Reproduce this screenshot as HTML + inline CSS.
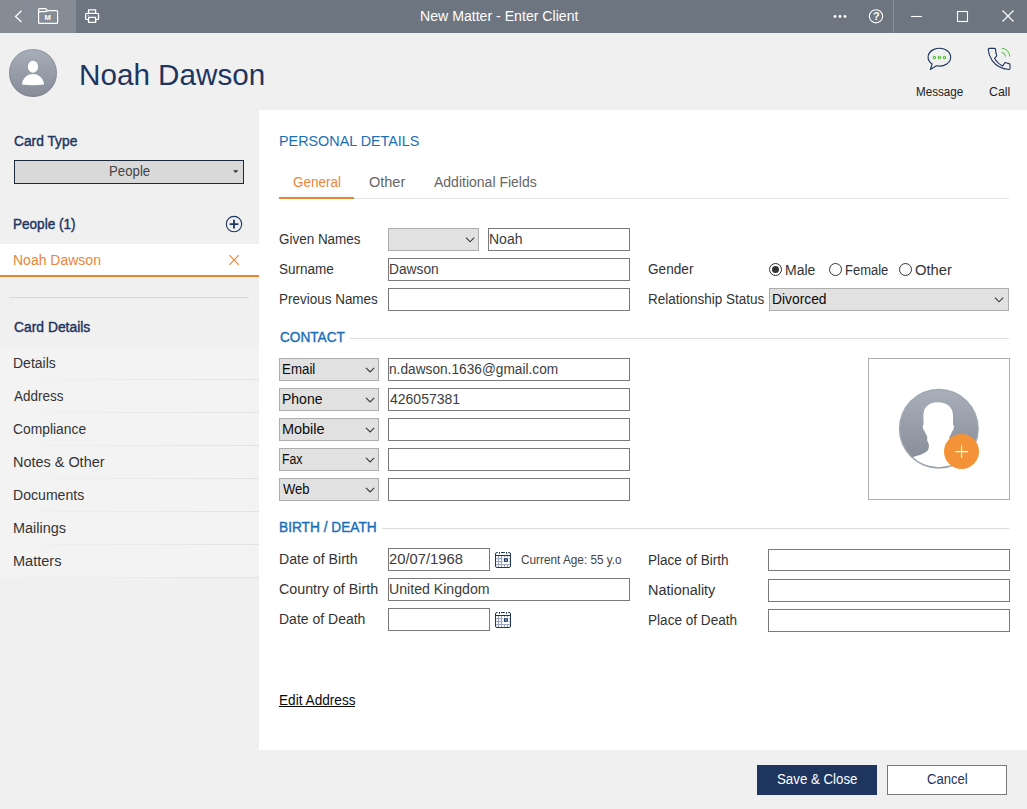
<!DOCTYPE html>
<html lang="en">
<head>
<meta charset="utf-8">
<title>New Matter - Enter Client</title>
<style>
html,body{margin:0;padding:0;}
body{width:1027px;height:809px;position:relative;overflow:hidden;background:#f0f0f0;font-family:"Liberation Sans",sans-serif;font-size:13.5px;color:#1e1e1e;}
.abs{position:absolute;}
.t{position:absolute;white-space:nowrap;line-height:1;transform-origin:0 0;}
svg{position:absolute;overflow:visible;}
#titlebar{left:0;top:0;width:1027px;height:33px;background:#6d7580;}
#tb-left{left:0;top:0;width:76px;height:33px;background:#858c96;}
#panel{left:259px;top:110px;width:768px;height:640px;background:#fff;}
.inp{position:absolute;box-sizing:border-box;border:1px solid #7a7a7a;background:#fff;height:23px;}
.sel{position:absolute;box-sizing:border-box;border:1px solid #adadad;background:#e1e1e1;height:23px;}
.hr{position:absolute;height:1px;background:#dcdcdc;}
.nav{position:absolute;left:0;width:259px;height:33px;background:#f3f3f3;}
.nav::after{content:"";position:absolute;left:0;right:0;bottom:0;height:1px;background:linear-gradient(90deg,#f2f2f2 0%,#ececec 40%,#e2e2e2 100%);}
.radio{position:absolute;box-sizing:border-box;width:13px;height:13px;border-radius:50%;border:1px solid #333;background:#fff;}
.radio.on::after{content:"";position:absolute;left:2px;top:2px;width:7px;height:7px;border-radius:50%;background:#333;}
</style>
</head>
<body>
<!-- TITLE BAR -->
<div id="titlebar" class="abs"></div>
<div id="tb-left" class="abs"></div>
<svg id="tbicons" style="left:0;top:0;" width="1027" height="33" viewBox="0 0 1027 33" fill="none" stroke="#fff" stroke-width="1.2">
  <!-- back -->
  <polyline points="21.5,10.8 15.5,16.4 21.5,22" stroke-width="1.3"/>
  <!-- folder -->
  <path d="M38.6 22.4 V9.6 a1 1 0 0 1 1 -1 H45.6 l2 2 H56.6 a1 1 0 0 1 1 1 V22.4 a1 1 0 0 1 -1 1 H39.6 a1 1 0 0 1 -1 -1 Z M38.6 11.6 H45.6 l2 -1" stroke-width="1.2"/>
  <!-- printer -->
  <path d="M88.6 13.4 V9.9 H95.6 V13.4 M88.6 19.6 H87 a1.4 1.4 0 0 1 -1.4 -1.4 V14.8 a1.4 1.4 0 0 1 1.4 -1.4 H97.2 a1.4 1.4 0 0 1 1.4 1.4 V18.2 a1.4 1.4 0 0 1 -1.4 1.4 H95.6 M88.6 17.3 H95.6 V22.4 H88.6 Z" stroke-width="1.3"/>
  <circle cx="88.2" cy="15.5" r="0.6" fill="#fff" stroke="none"/>
  <!-- dots -->
  <g fill="#fff" stroke="none"><circle cx="835" cy="16.5" r="1.4"/><circle cx="840" cy="16.5" r="1.4"/><circle cx="845" cy="16.5" r="1.4"/></g>
  <!-- help -->
  <circle cx="876" cy="16.3" r="6.6" stroke-width="1.1"/>
  <!-- sep -->
  <line x1="893.5" y1="0" x2="893.5" y2="33" stroke="#8a919a" stroke-width="1"/>
  <!-- min / max / close -->
  <line x1="911" y1="16.5" x2="922" y2="16.5" stroke-width="1.1"/>
  <rect x="957.5" y="11.5" width="10" height="10" stroke-width="1.1"/>
  <path d="M1002.5 10.5 L1013.5 21.5 M1013.5 10.5 L1002.5 21.5" stroke-width="1.1"/>
</svg>
<div class="t" style="left:44.4px;top:13.55px;font-size:7.6px;font-weight:bold;color:#fff;">M</div>
<div class="t" style="left:873px;top:11px;font-size:11px;font-weight:bold;color:#fff;">?</div>

<!-- HEADER -->
<div class="abs" id="avatar" style="left:9px;top:49px;width:48px;height:48px;border-radius:50%;background:linear-gradient(180deg,#a8aeb9,#858b97);box-shadow:inset 0 0 0 1px rgba(105,112,125,.3);"></div>
<svg style="left:9px;top:49px;" width="48" height="48" viewBox="9 49 48 48"><ellipse cx="33" cy="66.7" rx="5.1" ry="6" fill="#fff"/><path d="M21.9 84.6 C22.6 78.5 27 74 33 74 C39 74 43.4 78.5 44.1 84.6 Q33 85.8 21.9 84.6 Z" fill="#fff"/></svg>

<svg id="hdricons" style="left:900px;top:36px;" width="127" height="70" viewBox="900 36 127 70" fill="none">
  <path d="M932.13 64.02 A11.3 8.9 0 1 1 936.47 65.8 L930.3 69.5 Z" stroke="#1e3560" stroke-width="1.1" stroke-linejoin="round"/>
  <g stroke="#5abf3c" stroke-width="1.15"><circle cx="934.4" cy="57.4" r="1.15"/><circle cx="939.4" cy="57.4" r="1.15"/><circle cx="944.5" cy="57.4" r="1.15"/></g>
  <path d="M989.2 48.4 H994.4 Q995.4 48.4 995.5 49.4 Q995.7 52.6 996.6 55 Q996.9 55.9 996.2 56.6 L994.6 58.2 Q997.6 63.6 1002.8 66 L1004.4 63.2 Q1004.9 62.4 1005.8 62.7 Q1007.6 63.3 1009 63.6 Q1010 63.8 1010 64.8 V68.6 Q1010 69.5 1009 69.5 Q998 68.6 992.2 60.6 Q988.6 55.4 988.2 49.4 Q988.2 48.4 989.2 48.4 Z" stroke="#1e3560" stroke-width="1.1" stroke-linejoin="round"/>
  <path d="M1001.6 48.2 A8.6 8.6 0 0 1 1009.8 56.6" stroke="#58b947" stroke-width="1"/>
  <path d="M1001.4 52.4 A4.4 4.4 0 0 1 1005.6 56.6" stroke="#58b947" stroke-width="1"/>
</svg>

<!-- SIDEBAR -->
<div class="abs" style="left:14px;top:160px;width:230px;height:24px;box-sizing:border-box;border:1px solid #1c2b3c;background:#d9d9d9;"></div>
<svg style="left:232px;top:170px;" width="8" height="4" viewBox="0 0 8 4"><path d="M1 0.3 H6.4 L3.7 3.1 Z" fill="#333"/></svg>
<svg style="left:224px;top:214px;" width="20" height="20" viewBox="224 214 20 20" fill="none" stroke="#1e3560"><circle cx="234" cy="224.1" r="7.7" stroke-width="1.1"/><path d="M229.6 224.1 H238.4 M234 219.7 V228.5" stroke-width="1.8"/></svg>
<div class="abs" style="left:0;top:244px;width:259px;height:31px;background:#fff;border-bottom:2px solid #e9842f;"></div>
<svg style="left:228px;top:254px;" width="12" height="12" viewBox="228 254 12 12" fill="none" stroke="#e9842f" stroke-width="1.1"><path d="M229.4 255.2 L238.8 264.8 M238.8 255.2 L229.4 264.8"/></svg>
<div class="hr" style="left:9px;top:297px;width:240px;background:#d9d9d9;"></div>
<div class="nav" style="top:347px;"></div>
<div class="nav" style="top:380px;"></div>
<div class="nav" style="top:413px;"></div>
<div class="nav" style="top:446px;"></div>
<div class="nav" style="top:479px;"></div>
<div class="nav" style="top:512px;"></div>
<div class="nav" style="top:545px;"></div>

<!-- MAIN PANEL -->
<div id="panel" class="abs"></div>
<div class="hr" style="left:279px;top:198px;width:730px;background:#e4e4e4;"></div>
<div class="abs" style="left:279px;top:197px;width:75px;height:2px;background:#e9842f;"></div>

<div class="sel" style="left:388px;top:228px;width:91px;"></div>
<div class="inp" style="left:488px;top:228px;width:142px;"></div>
<div class="inp" style="left:388px;top:258px;width:242px;"></div>
<div class="inp" style="left:388px;top:288px;width:242px;"></div>

<div class="radio on" style="left:769px;top:263px;"></div>
<div class="radio" style="left:829px;top:263px;"></div>
<div class="radio" style="left:899px;top:263px;"></div>
<div class="sel" style="left:769px;top:288px;width:240px;"></div>

<div class="hr" style="left:350px;top:338px;width:659px;"></div>

<div class="sel" style="left:279px;top:358px;width:100px;"></div>
<div class="sel" style="left:279px;top:388px;width:100px;"></div>
<div class="sel" style="left:279px;top:418px;width:100px;"></div>
<div class="sel" style="left:279px;top:448px;width:100px;"></div>
<div class="sel" style="left:279px;top:478px;width:100px;"></div>
<div class="inp" style="left:388px;top:358px;width:242px;"></div>
<div class="inp" style="left:388px;top:388px;width:242px;"></div>
<div class="inp" style="left:388px;top:418px;width:242px;"></div>
<div class="inp" style="left:388px;top:448px;width:242px;"></div>
<div class="inp" style="left:388px;top:478px;width:242px;"></div>

<!-- chevrons -->
<svg style="left:0;top:0;" width="1027" height="809" viewBox="0 0 1027 809" fill="none" stroke="#3a3a3a" stroke-width="1.15">
  <polyline points="466,237.6 470.1,241.8 474.2,237.6"/>
  <polyline points="995,297.6 999.1,301.8 1003.2,297.6"/>
  <polyline points="366,367.8 370.1,372 374.2,367.8"/>
  <polyline points="366,397.8 370.1,402 374.2,397.8"/>
  <polyline points="366,427.8 370.1,432 374.2,427.8"/>
  <polyline points="366,457.8 370.1,462 374.2,457.8"/>
  <polyline points="366,487.8 370.1,492 374.2,487.8"/>
</svg>

<!-- photo box -->
<div class="abs" style="left:868px;top:358px;width:142px;height:142px;box-sizing:border-box;border:1px solid #abadb3;background:#fff;"></div>
<svg style="left:890px;top:380px;" width="100" height="100" viewBox="890 380 100 100">
  <defs>
    <linearGradient id="gr" x1="0" y1="0" x2="0" y2="1"><stop offset="0" stop-color="#a9afba"/><stop offset="1" stop-color="#848a95"/></linearGradient>
    <clipPath id="cp"><circle cx="938.8" cy="428.8" r="38.4"/></clipPath>
  </defs>
  <circle cx="938.8" cy="428.8" r="40" fill="#a0a7b1"/>
  <circle cx="938.8" cy="428.8" r="38.6" fill="url(#gr)"/>
  <path clip-path="url(#cp)" fill="#fff" d="M938 402.2 C929 402.2 923.2 407 923.4 416 L923.6 424.4 C922.4 425.2 922.6 429.6 924.8 431.4 C925.6 434 926.6 435.4 927.2 436 L927.2 441 C928.6 442.4 929.8 446 928 450 C925 454 918 455.4 913 457 C918 465 928 470 939 470 C950 470 960 465 966 456 C960 453 951 452 949.6 447 L949.4 436.4 C950.4 435.4 951.4 433.6 952 431.4 C954.2 429.8 954.4 425.4 953 424.4 L953 416 C953 407 947 402.2 938 402.2 Z"/>
  <circle cx="961.5" cy="451.5" r="17.5" fill="#f39237"/>
  <path d="M955.2 451.6 H968 M961.6 445.2 V458" stroke="#fff" stroke-width="1.1" fill="none"/>
</svg>

<div class="hr" style="left:382px;top:528px;width:627px;"></div>
<div class="inp" style="left:388px;top:548px;width:102px;"></div>
<div class="inp" style="left:388px;top:578px;width:242px;"></div>
<div class="inp" style="left:388px;top:608px;width:102px;"></div>
<div class="inp" style="left:768px;top:549px;width:242px;height:22px;"></div>
<div class="inp" style="left:768px;top:579px;width:242px;height:23px;"></div>
<div class="inp" style="left:768px;top:609px;width:242px;height:23px;"></div>

<!-- calendar icons -->
<svg style="left:495px;top:552px;" width="16" height="16" viewBox="0 0 16 16"><use href="#cal"/></svg>
<svg style="left:495px;top:612px;" width="16" height="16" viewBox="0 0 16 16"><use href="#cal"/></svg>
<svg width="0" height="0" style="left:0;top:0;"><defs><g id="cal">
  <rect x="0.5" y="0.5" width="15" height="15" rx="1.5" fill="#fff"/>
  <g stroke="#96a2bb" stroke-width="1" fill="none">
    <path d="M3.45 4 V15 M6.45 4 V15 M9.45 12.6 V15 M12.45 12.6 V15 M9.45 4 V5.2 M12.45 4 V5.2"/>
    <path d="M1 6.7 H7.6 M1 9.6 H7.6 M1 12.6 H15 M13.9 6.7 H15 M13.9 9.6 H15"/>
  </g>
  <g stroke="#1e3560" stroke-width="1" fill="none">
    <path d="M2.7 0.5 H2 A1.5 1.5 0 0 0 0.5 2 V14 A1.5 1.5 0 0 0 2 15.5 H14 A1.5 1.5 0 0 0 15.5 14 V2 A1.5 1.5 0 0 0 14 0.5 H13.2"/>
    <path d="M6 0.5 H9.8 M4.5 0 V1.8 M11.5 0 V1.8 M0.5 3.5 H15.5"/>
  </g>
  <rect x="8.9" y="6.2" width="4" height="3.7" fill="#1e3560"/>
  <rect x="10.1" y="7.3" width="1.8" height="1.7" fill="#96a2bb"/>
</g></defs></svg>

<div class="abs" style="left:279px;top:706px;width:76px;height:1px;background:#0a0a0a;"></div>

<!-- FOOTER -->
<div class="abs" style="left:757px;top:765px;width:120px;height:30px;background:#1e3560;"></div>
<div class="abs" style="left:887px;top:765px;width:120px;height:30px;box-sizing:border-box;border:1px solid #787878;background:#fff;"></div>

<div class="t" id="title" style="left:420px;top:9px;font-size:14px;transform:scale(1.0082,1.0000);color:#fff;">New Matter - Enter Client</div>
<div class="t" id="name" style="left:79px;top:59px;font-size:30.4px;transform:scale(0.9755,1.0000);color:#1e3560;">Noah Dawson</div>
<div class="t" id="msg" style="left:916px;top:86px;font-size:12.4px;transform:scale(0.9377,1.0000);color:#222;">Message</div>
<div class="t" id="call" style="left:989px;top:86px;font-size:12.4px;transform:scale(1.0000,1.0000);color:#222;">Call</div>
<div class="t" id="cardtype" style="left:14px;top:134px;font-size:14px;transform:scale(0.9838,1.0000);-webkit-text-stroke:0.42px;color:#1e3560;">Card Type</div>
<div class="t" id="people-sel" style="left:109px;top:164px;font-size:14px;transform:scale(0.9448,1.0000);color:#444;">People</div>
<div class="t" id="people1" style="left:13px;top:217px;font-size:14px;transform:scale(0.9679,1.0000);-webkit-text-stroke:0.42px;color:#1e3560;">People (1)</div>
<div class="t" id="noah2" style="left:13px;top:253px;font-size:14px;transform:scale(1.0000,1.0000);color:#e8863a;">Noah Dawson</div>
<div class="t" id="carddetails" style="left:14px;top:320px;font-size:14px;transform:scale(0.9901,1.0000);-webkit-text-stroke:0.42px;color:#1e3560;">Card Details</div>
<div class="t" id="n1" style="left:13px;top:356px;font-size:14px;transform:scale(1.0000,1.0000);color:#333333;">Details</div>
<div class="t" id="n2" style="left:14px;top:389px;font-size:14px;transform:scale(0.9643,1.0000);color:#333333;">Address</div>
<div class="t" id="n3" style="left:13px;top:422px;font-size:14px;transform:scale(0.9893,1.0000);color:#333333;">Compliance</div>
<div class="t" id="n4" style="left:13px;top:455px;font-size:14px;transform:scale(1.0316,1.0000);color:#333333;">Notes &amp; Other</div>
<div class="t" id="n5" style="left:13px;top:488px;font-size:14px;transform:scale(1.0060,1.0000);color:#333333;">Documents</div>
<div class="t" id="n6" style="left:13px;top:521px;font-size:14px;transform:scale(1.0332,1.0000);color:#333333;">Mailings</div>
<div class="t" id="n7" style="left:13px;top:554px;font-size:14px;transform:scale(1.0367,1.0000);color:#333333;">Matters</div>
<div class="t" id="pd" style="left:279px;top:133px;font-size:15.5px;transform:scale(0.9262,1.0000);color:#1b6fb8;">PERSONAL DETAILS</div>
<div class="t" id="tab1" style="left:293px;top:175px;font-size:14px;transform:scale(0.9652,1.0000);color:#e8863a;">General</div>
<div class="t" id="tab2" style="left:369px;top:175px;font-size:14px;transform:scale(1.0353,1.0000);color:#666;">Other</div>
<div class="t" id="tab3" style="left:434px;top:175px;font-size:14px;transform:scale(1.0000,1.0000);color:#666;">Additional Fields</div>
<div class="t" id="l1" style="left:279px;top:232px;font-size:14px;transform:scale(0.9612,1.0000);color:#333333;">Given Names</div>
<div class="t" id="l2" style="left:279px;top:262px;font-size:14px;transform:scale(0.9661,1.0000);color:#333333;">Surname</div>
<div class="t" id="l3" style="left:279px;top:292px;font-size:14px;transform:scale(0.9622,1.0000);color:#333333;">Previous Names</div>
<div class="t" id="v1" style="left:489px;top:232px;font-size:14px;transform:scale(1.0000,1.0000);color:#3c3c3c;">Noah</div>
<div class="t" id="v2" style="left:389px;top:262px;font-size:14px;transform:scale(0.9832,1.0000);color:#3c3c3c;">Dawson</div>
<div class="t" id="l4" style="left:648px;top:262px;font-size:14px;transform:scale(0.9737,1.0000);color:#333333;">Gender</div>
<div class="t" id="l5" style="left:648px;top:292px;font-size:14px;transform:scale(0.9631,1.0000);color:#333333;">Relationship Status</div>
<div class="t" id="g1" style="left:785px;top:263px;font-size:14px;transform:scale(1.0000,1.0000);color:#333333;">Male</div>
<div class="t" id="g2" style="left:845px;top:263px;font-size:14px;transform:scale(0.9274,1.0000);color:#333333;">Female</div>
<div class="t" id="g3" style="left:915px;top:263px;font-size:14px;transform:scale(1.0531,1.0000);color:#333333;">Other</div>
<div class="t" id="v3" style="left:772px;top:292px;font-size:14px;transform:scale(0.9874,1.0000);color:#0a0a0a;">Divorced</div>
<div class="t" id="s1" style="left:280px;top:330px;font-size:14px;transform:scale(0.9733,1.0000);-webkit-text-stroke:0.42px;color:#1b6fb8;">CONTACT</div>
<div class="t" id="c1" style="left:282px;top:362px;font-size:14px;transform:scale(0.9516,1.0000);color:#0a0a0a;">Email</div>
<div class="t" id="c2" style="left:282px;top:392px;font-size:14px;transform:scale(1.0000,1.0000);color:#0a0a0a;">Phone</div>
<div class="t" id="c3" style="left:282px;top:422px;font-size:14px;transform:scale(1.0321,1.0000);color:#0a0a0a;">Mobile</div>
<div class="t" id="c4" style="left:282px;top:452px;font-size:14px;transform:scale(0.8780,1.0000);color:#0a0a0a;">Fax</div>
<div class="t" id="c5" style="left:283px;top:482px;font-size:14px;transform:scale(0.9326,1.0000);color:#0a0a0a;">Web</div>
<div class="t" id="v4" style="left:389px;top:362px;font-size:14px;transform:scale(0.9780,1.0000);color:#3c3c3c;">n.dawson.1636@gmail.com</div>
<div class="t" id="v5" style="left:390px;top:392px;font-size:14px;transform:scale(1.0000,1.0000);color:#3c3c3c;">426057381</div>
<div class="t" id="s2" style="left:279px;top:520px;font-size:14px;transform:scale(0.9780,1.0000);-webkit-text-stroke:0.42px;color:#1b6fb8;">BIRTH / DEATH</div>
<div class="t" id="l6" style="left:279px;top:552px;font-size:14px;transform:scale(1.0108,1.0000);color:#333333;">Date of Birth</div>
<div class="t" id="l7" style="left:279px;top:582px;font-size:14px;transform:scale(1.0191,1.0000);color:#333333;">Country of Birth</div>
<div class="t" id="l8" style="left:279px;top:612px;font-size:14px;transform:scale(1.0000,1.0000);color:#333333;">Date of Death</div>
<div class="t" id="v6" style="left:389px;top:552px;font-size:14px;transform:scale(1.0552,1.0000);color:#3c3c3c;">20/07/1968</div>
<div class="t" id="v7" style="left:389px;top:582px;font-size:14px;transform:scale(1.0095,1.0000);color:#3c3c3c;">United Kingdom</div>
<div class="t" id="age" style="left:521px;top:554px;font-size:12.4px;transform:scale(0.9510,1.0000);color:#444;">Current Age: 55 y.o</div>
<div class="t" id="l9" style="left:648px;top:553px;font-size:14px;transform:scale(0.9681,1.0000);color:#333333;">Place of Birth</div>
<div class="t" id="l10" style="left:648px;top:583px;font-size:14px;transform:scale(1.0297,1.0000);color:#333333;">Nationality</div>
<div class="t" id="l11" style="left:648px;top:613px;font-size:14px;transform:scale(0.9702,1.0000);color:#333333;">Place of Death</div>
<div class="t" id="edit" style="left:279px;top:693px;font-size:14px;transform:scale(0.9740,1.0000);color:#0a0a0a;">Edit Address</div>
<div class="t" id="save" style="left:777px;top:772px;font-size:14px;transform:scale(0.9487,1.0000);color:#fff;">Save &amp; Close</div>
<div class="t" id="cancel" style="left:927px;top:772px;font-size:14px;transform:scale(0.9355,1.0000);color:#1e3560;">Cancel</div>
</body>
</html>
